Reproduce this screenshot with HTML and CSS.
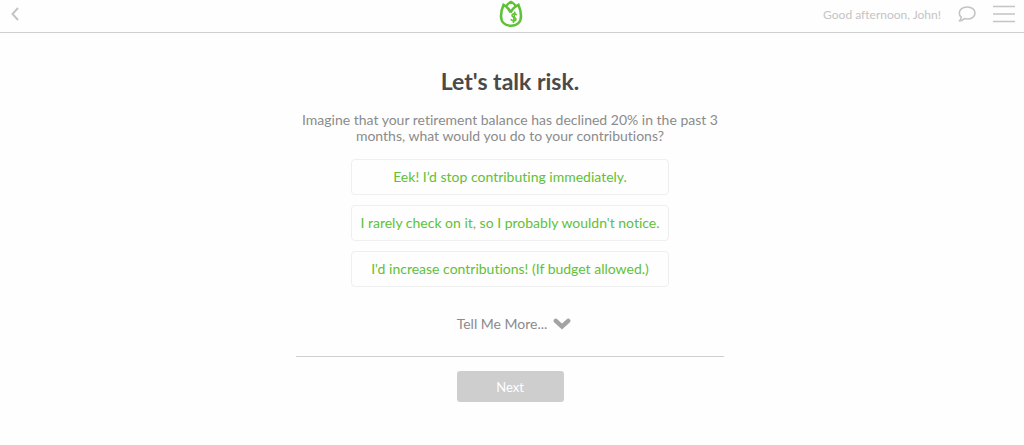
FILE: index.html
```html
<!DOCTYPE html>
<html lang="en">
<head>
    <meta charset="UTF-8">
    <meta name="viewport" content="width=device-width, initial-scale=1.0">
    <title>Let's talk risk</title>
    <link rel="stylesheet" href="styles.css">
</head>
<body>
    <header class="topbar">
        <div class="topbar-left">
            <button type="button" class="icon-button" aria-label="Back">
                <svg width="8" height="14" viewBox="0 0 8 14" fill="none" stroke="#c4c4c4" stroke-width="2">
                    <path d="M7 1L1.5 7L7 13"/>
                </svg>
            </button>
        </div>

        <a href="#" class="logo" aria-label="Home">
            <svg width="24" height="28" viewBox="0 0 24 28" fill="none" stroke="#5fc136">
                <!-- Tulip -->
                <path stroke-width="2.6" stroke-linejoin="miter" d="M11.6 12.6C10.4 9.6 8 6.6 4.6 4.8C3 8.4 2 12 2 16C2 22 6 25.8 12 25.8C18 25.8 22 22 22 16C22 12 21 8.4 19.4 4.8C15.6 6.6 12.8 9.4 11.6 12.6"/>
                <path stroke-width="2.2" stroke-linejoin="round" d="M7 6.2C8.4 4.4 10 3 12 1.8C14 3 15.6 4.4 17 6.2"/>
                <!-- Dollar sign -->
                <path stroke-width="1.6" stroke-linecap="round" d="M17.2 14.6C16 13.2 12.8 13.6 13 15.6C13.2 17.4 17 17 17 19.2C17 21.2 13.6 21.4 12.2 19.8M15.7 12.4L14.5 22.4"/>
            </svg>
        </a>

        <div class="topbar-right">
            <span class="greeting">Good afternoon, John!</span>
            <button type="button" class="icon-button" aria-label="Chat">
                <svg width="18" height="16" viewBox="0 0 18 16" fill="none" stroke="#c4c4c4" stroke-width="1.6" stroke-linejoin="round">
                    <path d="M9.2 1C13.8 1 17 3.6 17 7C17 10.4 13.8 13 9.2 13C8.2 13 7.2 12.9 6.4 12.6C5.2 13.9 3.4 14.8 1.4 15C2.4 13.9 3.1 12.6 3.2 11.2C2 10.1 1.3 8.6 1.3 7C1.3 3.6 4.6 1 9.2 1Z"/>
                </svg>
            </button>
            <button type="button" class="icon-button" aria-label="Menu">
                <svg width="22" height="18" viewBox="0 0 22 18" stroke="#c4c4c4" stroke-width="1.4">
                    <path d="M0 1.5H22M0 9H22M0 16.5H22"/>
                </svg>
            </button>
        </div>
    </header>

    <main class="page">
        <div class="question">
            <h1>Let's talk risk.</h1>
            <p class="question-text">Imagine that your retirement balance has declined 20% in the past 3 months, what would you do to your contributions?</p>

            <div class="answers">
                <button type="button" class="answer">Eek! I’d stop contributing immediately.</button>
                <button type="button" class="answer">I rarely check on it, so I probably wouldn't notice.</button>
                <button type="button" class="answer">I'd increase contributions! (If budget allowed.)</button>
            </div>

            <button type="button" class="more">
                Tell Me More...
                <svg width="18" height="12" viewBox="0 0 18 12" fill="none" stroke="#a3a3a3" stroke-width="4.4" stroke-linecap="round">
                    <path d="M2.8 2.8L9 8.6L15.2 2.8"/>
                </svg>
            </button>

            <div class="actions">
                <button type="button" class="next">Next</button>
            </div>
        </div>
    </main>
</body>
</html>
```
FILE: styles.css
```css
* {
    box-sizing: border-box;
}

body {
    margin: 0;
    background-color: #fefefe;
    color: #8b8b8b;
    font-family: Lato, "Liberation Sans", sans-serif;
    font-size: 14px;
    font-variant-ligatures: none;
}

button {
    font: inherit;
    font-variant-ligatures: none;
    color: inherit;
    cursor: pointer;
}

/* Top bar */
.topbar {
    display: grid;
    grid-template-columns: 1fr auto 1fr;
    align-items: center;
    height: 33px;
    padding: 0 9px 4px 11px;
    border-bottom: 1px solid #cfcfcf;
}

.topbar-left {
    margin-right: 4px;
}

.topbar-right {
    display: flex;
    align-items: center;
    justify-content: flex-end;
    gap: 17px;
}

.icon-button {
    display: block;
    padding: 0;
    border: none;
    background: none;
}

.icon-button svg,
.logo svg {
    display: block;
}

.logo {
    margin-right: 4px;
}

.greeting {
    color: #c4c4c4;
    font-size: 12px;
}

/* Question */
.page {
    padding: 34px 4px 0 0;
}

.question {
    display: flex;
    flex-direction: column;
    align-items: center;
    max-width: 428px;
    margin: 0 auto;
}

h1 {
    margin: 0;
    color: #4a4a4a;
    font-size: 23px;
    line-height: 28px;
}

.question-text {
    margin: 17px 0 15px;
    line-height: 16px;
    text-align: center;
}

.answers {
    display: flex;
    flex-direction: column;
    gap: 10px;
    width: 100%;
    max-width: 318px;
}

.answer {
    height: 36px;
    padding: 0 0 2px;
    border: 1px solid #efefef;
    border-radius: 4px;
    background-color: #fefefe;
    color: #5fc136;
}

.more {
    display: flex;
    align-items: center;
    gap: 6px;
    margin: 27px 0 22px;
    padding: 0 0 0 8px;
    border: none;
    background: none;
    line-height: 20px;
}

.actions {
    display: flex;
    justify-content: center;
    width: 100%;
    padding-top: 14px;
    border-top: 1px solid #cfcfcf;
}

.next {
    width: 107px;
    height: 31px;
    border: none;
    border-radius: 3px;
    background-color: #cecece;
    color: #fff;
    font-size: 13px;
}
```
